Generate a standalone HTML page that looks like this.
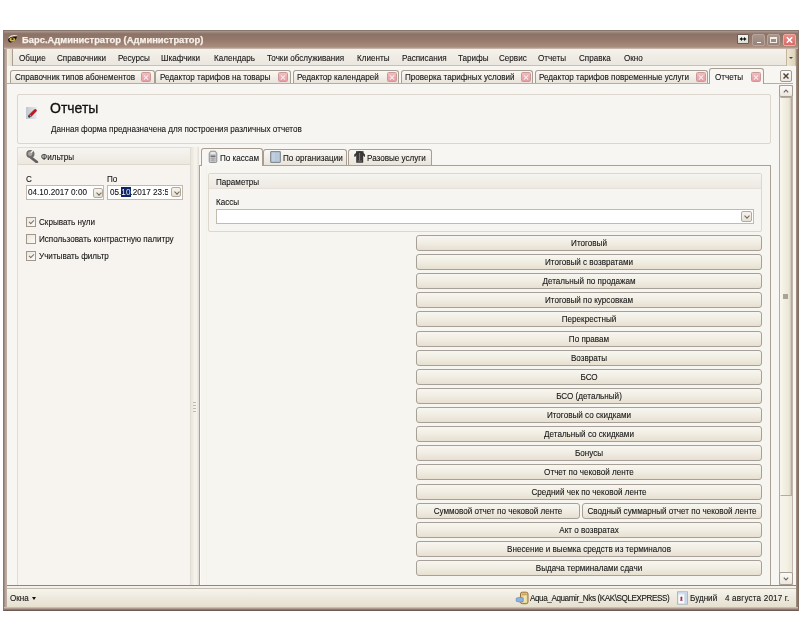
<!DOCTYPE html>
<html><head><meta charset="utf-8">
<style>
*{margin:0;padding:0;box-sizing:border-box}
html,body{width:800px;height:640px;background:#fff;overflow:hidden;font-family:"Liberation Sans",sans-serif;font-size:8px;color:#1e1e1e}
div,span,svg{position:absolute}
.t{white-space:nowrap;line-height:10px;font-size:9px;transform:scaleX(.9);transform-origin:0 0;color:#141414;-webkit-text-stroke:.1px #141414}
#root{left:0;top:0;width:800px;height:640px;will-change:transform;overflow:hidden;filter:blur(0.35px)}
.tab{border:1px solid #a89d91;border-bottom:none;border-radius:3px 3px 0 0;background:linear-gradient(#faf8f4,#e9e4db)}
.x{width:10px;height:10px;border:1px solid #c99a9a;border-radius:1.5px;background:linear-gradient(#f2bcc0,#e59ca2)}
.x:before,.x:after{content:"";position:absolute;left:1px;top:3.6px;width:6px;height:1.1px;background:#fbeef0;transform:rotate(45deg)}
.x:after{transform:rotate(-45deg)}
.btn{left:416px;width:346px;height:16px;border:1px solid #a7a098;border-radius:3px;background:linear-gradient(#f8f6f0,#f1ede3 50%,#e7e0d1);text-align:center;line-height:14px;white-space:nowrap;font-size:9px;color:#141414;-webkit-text-stroke:.1px #141414}
.btn span{position:absolute;left:50%;top:0;transform:translateX(-50%) scaleX(.9)}
.cb{width:10px;height:10px;border:1px solid #a0978a;background:linear-gradient(135deg,#ebe7df,#fbfaf7)}
.chk{left:2px;top:1px;width:5px;height:3px;border-left:1.2px solid #7b746b;border-bottom:1.2px solid #7b746b;transform:rotate(-45deg);top:2px}
.dd{width:10px;height:10px;border:1px solid #b2a99c;border-radius:2px;background:linear-gradient(#f6f3ed,#e6e0d5)}
.dd:after{content:"";position:absolute;left:2.5px;top:1.5px;width:3px;height:3px;border-right:1.2px solid #6d655c;border-bottom:1.2px solid #6d655c;transform:rotate(45deg)}
</style></head><body><div id="root">
<!-- window frame -->
<div style="left:3px;top:30px;width:796px;height:581px;background:linear-gradient(90deg,#8c7a70,#b5a398 1px,#c0afa4 3px,#c4b8b0 4px);border:1px solid #8a776c;border-bottom-color:#6e5a50"></div>
<div style="left:796px;top:48px;width:3px;height:562px;background:linear-gradient(90deg,#a89488,#8a7868 1.5px,#7a665c)"></div>
<div style="left:4px;top:607px;width:794px;height:3px;background:linear-gradient(#dccfc6,#bba89c 1px,#a48e82 2px,#7a665c 3px)"></div>
<div style="left:4px;top:31px;width:794px;height:18px;background:linear-gradient(#b09a90 0,#a08a80 1px,#8c7266 3px,#94796c 9px,#a98c7c 16px,#b8a498 17px,#d0c4bc 18px)"></div>
<!-- eye icon -->
<svg style="left:7px;top:33px" width="12" height="11" viewBox="0 0 12 11">
  <path d="M1.5 4.5 Q5 1 10.5 2.5 L9 3.5 Q5 2.5 2 5.5Z" fill="#efe9e3"/>
  <path d="M1 6.5 Q3 3 10 3.5 Q9 8 4 9.5 Q1.5 10 1 6.5Z" fill="#141008"/>
  <ellipse cx="5.3" cy="6.5" rx="2.8" ry="2" fill="#c9b450"/>
  <ellipse cx="5.5" cy="6" rx="1.2" ry="1" fill="#3a2a08"/>
</svg>
<div class="t" style="left:22px;top:35px;font-weight:bold;font-size:9.4px;letter-spacing:0px;color:#f7f1ea;transform:none;-webkit-text-stroke:0.25px #f7f1ea">Барс.Администратор (Администратор)</div>
<!-- title buttons -->
<div style="left:737px;top:34px;width:12px;height:10px;background:linear-gradient(#f4f4f0,#dcdcd6);border:1px solid #6a5a52;border-radius:1px"></div>
<svg style="left:737px;top:34px" width="12" height="10"><path d="M2.5 5 L5 3 L5 7Z M9.5 5 L7 3 L7 7Z" fill="#111"/><rect x="4" y="4.4" width="4" height="1.2" fill="#111"/></svg>
<div style="left:752px;top:34px;width:13px;height:12px;background:linear-gradient(#a8958b,#97817a);border:1px solid #b6a49a;border-radius:2px"></div>
<div style="left:756.5px;top:41.5px;width:4px;height:1.6px;background:#fff"></div>
<div style="left:767px;top:34px;width:13px;height:12px;background:linear-gradient(#a8958b,#97817a);border:1px solid #b6a49a;border-radius:2px"></div>
<div style="left:770px;top:37px;width:7px;height:6px;border:1px solid #f4eee8;border-top:2px solid #f4eee8"></div>
<div style="left:783px;top:34px;width:13px;height:12px;background:linear-gradient(#ea8c86,#d76a66);border:1px solid #f0aaa4;border-radius:2px"></div>
<svg style="left:783px;top:34px" width="13" height="12"><path d="M3.8 3.3 L9.2 8.7 M9.2 3.3 L3.8 8.7" stroke="#fff" stroke-width="1.6"/></svg>

<!-- menu bar -->
<div style="left:7px;top:49px;width:788px;height:17px;background:linear-gradient(#f5f2ec,#ebe6de);border-bottom:1px solid #c9bfb3"></div>
<div style="left:7px;top:49px;width:6px;height:17px;background:linear-gradient(90deg,#f4efe4,#e8dfc8);border-right:1px solid #a89e94;border-radius:2px 0 0 0"></div>
<div class="t" style="left:19px;top:53px">Общие</div>
<div class="t" style="left:57px;top:53px">Справочники</div>
<div class="t" style="left:118px;top:53px">Ресурсы</div>
<div class="t" style="left:161px;top:53px">Шкафчики</div>
<div class="t" style="left:214px;top:53px">Календарь</div>
<div class="t" style="left:267px;top:53px">Точки обслуживания</div>
<div class="t" style="left:357px;top:53px">Клиенты</div>
<div class="t" style="left:402px;top:53px">Расписания</div>
<div class="t" style="left:458px;top:53px">Тарифы</div>
<div class="t" style="left:499px;top:53px">Сервис</div>
<div class="t" style="left:538px;top:53px">Отчеты</div>
<div class="t" style="left:579px;top:53px">Справка</div>
<div class="t" style="left:624px;top:53px">Окно</div>
<div style="left:786px;top:49px;width:9px;height:17px;background:linear-gradient(90deg,#ede6d2,#ddd3b9);border-left:1px solid #c1b59c"></div>
<div style="left:789px;top:57px;width:0;height:0;border-left:2px solid transparent;border-right:2px solid transparent;border-top:2px solid #444"></div>

<!-- tab strip -->
<div style="left:7px;top:66px;width:789px;height:19px;background:#f8f6f2"></div>
<div style="left:7px;top:83px;width:786px;height:1px;background:#b7ada1"></div>
<div class="tab" style="left:10px;top:70px;width:145px;height:13px"></div>
<div class="t" style="left:15px;top:72px">Справочник типов абонементов</div>
<div class="x" style="left:141px;top:72px"></div>
<div class="tab" style="left:155px;top:70px;width:136px;height:13px"></div>
<div class="t" style="left:160px;top:72px">Редактор тарифов на товары</div>
<div class="x" style="left:278px;top:72px"></div>
<div class="tab" style="left:293px;top:70px;width:106px;height:13px"></div>
<div class="t" style="left:297px;top:72px">Редактор календарей</div>
<div class="x" style="left:387px;top:72px"></div>
<div class="tab" style="left:401px;top:70px;width:132px;height:13px"></div>
<div class="t" style="left:405px;top:72px">Проверка тарифных условий</div>
<div class="x" style="left:521px;top:72px"></div>
<div class="tab" style="left:535px;top:70px;width:173px;height:13px"></div>
<div class="t" style="left:539px;top:72px">Редактор тарифов повременные услуги</div>
<div class="x" style="left:696px;top:72px"></div>
<div class="tab" style="left:709px;top:68px;width:55px;height:17px;background:#f8f6f2"></div>
<div class="t" style="left:715px;top:72px">Отчеты</div>
<div class="x" style="left:751px;top:72px"></div>
<div style="left:780px;top:70px;width:12px;height:12px;border:1px solid #a49a8e;border-radius:2px;background:linear-gradient(#fbfaf7,#ebe6de)"></div>
<svg style="left:780px;top:70px" width="12" height="12"><path d="M3.5 3.5 L8.5 8.5 M8.5 3.5 L3.5 8.5" stroke="#4a4038" stroke-width="1.4"/></svg>

<!-- content area -->
<div style="left:7px;top:84px;width:789px;height:501px;background:#f8f6f2"></div>
<!-- header panel -->
<div style="left:17px;top:94px;width:754px;height:50px;background:#f7f5f1;border:1px solid #dcd6cc;border-radius:2px"></div>
<svg style="left:26px;top:106px" width="12" height="13" viewBox="0 0 12 13">
  <defs><linearGradient id="ig" x1="0" x2="1"><stop offset="0" stop-color="#c2c6ce"/><stop offset="1" stop-color="#e6e8ee"/></linearGradient></defs>
  <rect x="0" y="1" width="10.5" height="12" fill="url(#ig)"/>
  <path d="M3.2 8.6 L8.4 3.4 Q9.6 2.6 10.6 3.8 Q11.2 4.8 10.4 5.6 L5.3 10.7Z" fill="#b41c26"/>
  <path d="M4 7.8 L8.6 3.2" stroke="#d84048" stroke-width="0.8"/>
  <path d="M3.2 8.6 L5.3 10.7 L3.6 11.6 Q2.4 11.8 2.1 10.6 Q2 9.6 3.2 8.6Z" fill="#26262c"/>
  <circle cx="4.2" cy="9.8" r="0.6" fill="#e8e8ea"/>
</svg>
<div class="t" style="left:50px;top:101px;font-size:14px;line-height:14px;color:#111;transform:none;-webkit-text-stroke:0.3px #111">Отчеты</div>
<div class="t" style="left:51px;top:124px">Данная форма предназначена для построения различных отчетов</div>

<!-- left panel -->
<div style="left:17px;top:147px;width:174px;height:438px;background:#f7f4ef;border:1px solid #e2ddd4;border-bottom:none"></div>
<div style="left:18px;top:148px;width:172px;height:17px;background:linear-gradient(#f7f5f1,#ece8e0);border-bottom:1px solid #ddd7cd"></div>
<svg style="left:25px;top:149px" width="14" height="14" viewBox="0 0 14 14">
  <path d="M6 8.5 L11.8 13" stroke="#626060" stroke-width="2.8" stroke-linecap="round"/>
  <circle cx="5.4" cy="5" r="4.1" fill="#6f6d6b"/>
  <circle cx="5.2" cy="4.8" r="2.2" fill="#a9a7a4"/>
  <path d="M8.2 1.2 L6 3.8" stroke="#f1eee8" stroke-width="1.4"/>
</svg>
<div class="t" style="left:41px;top:152px">Фильтры</div>
<div class="t" style="left:26px;top:174px">С</div>
<div class="t" style="left:107px;top:174px">По</div>
<div style="left:26px;top:185px;width:78px;height:15px;background:#fff;border:1px solid #c2baae"></div>
<div class="t" style="left:28px;top:186.5px;font-size:9.6px;transform:scaleX(.85)">04.10.2017 0:00</div>
<div class="dd" style="left:93px;top:188px"></div>
<div style="left:107px;top:185px;width:76px;height:15px;background:#fff;border:1px solid #c2baae"></div>
<div style="left:121px;top:187px;width:10px;height:10px;background:#0b246a"></div>
<div style="left:108px;top:186px;width:60px;height:13px;overflow:hidden">
  <div class="t" style="left:1.5px;top:0.5px;font-size:9.6px;transform:scaleX(.85)">05.<span style="position:static;color:#fff">10</span>.2017 23:59</div>
</div>
<div class="dd" style="left:171px;top:187px"></div>
<div class="cb" style="left:26px;top:217px"><div class="chk"></div></div>
<div class="t" style="left:39px;top:217px">Скрывать нули</div>
<div class="cb" style="left:26px;top:234px"></div>
<div class="t" style="left:39px;top:234px">Использовать контрастную палитру</div>
<div class="cb" style="left:26px;top:251px"><div class="chk"></div></div>
<div class="t" style="left:39px;top:251px">Учитывать фильтр</div>

<!-- splitter -->
<div style="left:191px;top:147px;width:8px;height:438px;background:linear-gradient(90deg,#e8e6e0,#eeeae0 2px,#f5f1eb 3px,#f5f1eb 6px,#e6e0d8 7px)"></div>
<div style="left:193px;top:402px;width:3px;height:1px;background:#c0b8ac"></div>
<div style="left:193px;top:405px;width:3px;height:1px;background:#c0b8ac"></div>
<div style="left:193px;top:408px;width:3px;height:1px;background:#c0b8ac"></div>
<div style="left:193px;top:411px;width:3px;height:1px;background:#c0b8ac"></div>

<!-- tab control -->
<div style="left:199px;top:165px;width:572px;height:420px;background:#f7f5f0;border:1px solid #aaa094;border-bottom:none"></div>
<div style="left:200px;top:166px;width:1px;height:419px;background:#fcfbf8"></div>
<div style="left:206px;top:166px;width:1px;height:419px;background:#f3f0ea"></div>
<div class="tab" style="left:263px;top:149px;width:84px;height:16px"></div>
<div class="tab" style="left:348px;top:149px;width:84px;height:16px"></div>
<div class="tab" style="left:201px;top:148px;width:62px;height:18px;background:#f8f6f2"></div>
<svg style="left:208px;top:150px" width="10" height="13" viewBox="0 0 10 13">
  <path d="M2.5 1.2 L7.5 1.2 L8.8 3.5 L8.8 11.5 Q8.8 12.5 7.8 12.5 L2.2 12.5 Q1.2 12.5 1.2 11.5 L1.2 3.5Z" fill="#c9cacc" stroke="#88888a" stroke-width="0.9"/>
  <rect x="2.8" y="2" width="4.4" height="2" fill="#e6e8ec"/>
  <rect x="2.6" y="5.6" width="4.8" height="1.2" fill="#5a5a5c"/>
  <path d="M2.5 8.3 H7.5 M2.5 10.2 H7.5 M4.2 7.5 V11.5 M5.8 7.5 V11.5" stroke="#9a9a9c" stroke-width="0.6"/>
</svg>
<div class="t" style="left:220px;top:153px">По кассам</div>
<svg style="left:270px;top:151px" width="11" height="12" viewBox="0 0 11 12">
  <rect x="0.6" y="0.6" width="9.8" height="10.8" rx="0.8" fill="#b4c5d6" stroke="#858c94" stroke-width="1.1"/>
  <rect x="2" y="1.5" width="3.2" height="9" fill="#c0d0e0"/><rect x="5.8" y="1.5" width="3.4" height="9" fill="#b8c9db"/>
</svg>
<div class="t" style="left:283px;top:153px">По организации</div>
<svg style="left:353px;top:150px" width="13" height="14" viewBox="0 0 13 14">
  <path d="M3 1.2 Q6.8 0.6 10.6 1.2 L10.6 3 L12 4.6 L12 6.8 L11 6.8 L10.2 5.2 L10.2 12.8 L3.2 12.8 L3.2 5.2 L2.4 6.8 L1.2 6.8 L1.2 4.6 L3 3Z" fill="#3a3836"/>
  <rect x="6.2" y="3" width="0.9" height="8" fill="#8a8682"/>
  <rect x="4.5" y="10.5" width="4.5" height="1.2" fill="#6a6662"/>
</svg>
<div class="t" style="left:367px;top:153px">Разовые услуги</div>

<!-- params group -->
<div style="left:208px;top:173px;width:554px;height:59px;background:#f7f5f1;border:1px solid #ddd7cd;border-radius:2px"></div>
<div style="left:209px;top:174px;width:552px;height:15px;background:linear-gradient(#f6f4f0,#ede9e2);border-bottom:1px solid #e6e1d8"></div>
<div class="t" style="left:216px;top:177px">Параметры</div>
<div class="t" style="left:216px;top:197px">Кассы</div>
<div style="left:216px;top:209px;width:538px;height:15px;background:#fff;border:1px solid #c2baae"></div>
<div class="dd" style="left:741px;top:211px;width:11px;height:11px"></div>

<!-- buttons -->
<div class="btn" style="top:235px"><span>Итоговый</span></div>
<div class="btn" style="top:254px"><span>Итоговый с возвратами</span></div>
<div class="btn" style="top:273px"><span>Детальный по продажам</span></div>
<div class="btn" style="top:292px"><span>Итоговый по курсовкам</span></div>
<div class="btn" style="top:311px"><span>Перекрестный</span></div>
<div class="btn" style="top:331px"><span>По правам</span></div>
<div class="btn" style="top:350px"><span>Возвраты</span></div>
<div class="btn" style="top:369px"><span>БСО</span></div>
<div class="btn" style="top:388px"><span>БСО (детальный)</span></div>
<div class="btn" style="top:407px"><span>Итоговый со скидками</span></div>
<div class="btn" style="top:426px"><span>Детальный со скидками</span></div>
<div class="btn" style="top:445px"><span>Бонусы</span></div>
<div class="btn" style="top:464px"><span>Отчет по чековой ленте</span></div>
<div class="btn" style="top:484px"><span>Средний чек по чековой ленте</span></div>
<div class="btn" style="top:503px;width:164px"><span>Суммовой отчет по чековой ленте</span></div>
<div class="btn" style="top:503px;left:582px;width:180px"><span>Сводный суммарный отчет по чековой ленте</span></div>
<div class="btn" style="top:522px"><span>Акт о возвратах</span></div>
<div class="btn" style="top:541px"><span>Внесение и выемка средств из терминалов</span></div>
<div class="btn" style="top:560px"><span>Выдача терминалами сдачи</span></div>

<!-- scrollbar -->
<div style="left:779px;top:85px;width:14px;height:500px;background:linear-gradient(90deg,#f6f3ec,#f4f1e6 50%,#ebe6d8);border-left:1px solid #b5aca3;border-right:1px solid #c2b8b0"></div>
<div style="left:779px;top:85px;width:14px;height:12px;border:1px solid #a89e92;border-radius:2px;background:linear-gradient(#fbfaf7,#ece7dd)"></div>
<svg style="left:779px;top:85px" width="14" height="12"><path d="M4.8 7.3 L7 5.1 L9.2 7.3" stroke="#6e6862" stroke-width="1.2" fill="none"/></svg>
<div style="left:780px;top:97px;width:12px;height:399px;border:1px solid #b4aa9e;border-left-color:#f8f4ee;border-radius:1px;background:linear-gradient(90deg,#f8f6ec,#f0eee0 40%,#ebe7d6 80%,#cdc3b8)"></div>
<div style="left:783px;top:294px;width:4.5px;height:4.5px;background:#aaa498"></div>
<div style="left:779px;top:572px;width:14px;height:13px;border:1px solid #a89e92;border-radius:2px;background:linear-gradient(#fbfaf7,#ece7dd)"></div>
<svg style="left:779px;top:572px" width="14" height="13"><path d="M4.8 5.7 L7 7.9 L9.2 5.7" stroke="#6e6862" stroke-width="1.2" fill="none"/></svg>

<!-- bottom lines -->
<div style="left:7px;top:585px;width:789px;height:1px;background:#8f877c"></div>
<div style="left:7px;top:586px;width:789px;height:2px;background:#f4f1ec"></div>
<div style="left:7px;top:588px;width:789px;height:1px;background:#c4bbaf"></div>
<!-- status bar -->
<div style="left:7px;top:589px;width:789px;height:18px;background:linear-gradient(#f6f4ee,#eeeadf 45%,#e6e0cf)"></div>
<div class="t" style="left:10px;top:593px">Окна</div>
<div style="left:32px;top:597px;width:0;height:0;border-left:2.5px solid transparent;border-right:2.5px solid transparent;border-top:3px solid #111"></div>
<svg style="left:515px;top:591px" width="14" height="14" viewBox="0 0 14 14">
  <rect x="5.5" y="1.2" width="7.5" height="11.5" rx="1.8" fill="#e2d08a" stroke="#9c6e34" stroke-width="1"/>
  <rect x="6.8" y="2.6" width="5" height="1.6" fill="#c8a060"/>
  <rect x="8.5" y="4.5" width="3" height="7" fill="#efe4b0"/>
  <path d="M1.2 7.2 L5 6.2 L8.2 7 L8.2 10.4 L5 11.2 L1.2 10.2Z" fill="#8ab2e2" stroke="#5a80b8" stroke-width="0.6"/>
</svg>
<div class="t" style="left:530px;top:593px;letter-spacing:-0.45px">Aqua_Aquamir_Nks (KAK\SQLEXPRESS)</div>
<svg style="left:677px;top:591px" width="11" height="14" viewBox="0 0 11 14">
  <rect x="0.6" y="0.8" width="9.8" height="12.4" fill="#d6e2ee" stroke="#a2b2c2" stroke-width="0.9"/>
  <rect x="1.4" y="3.6" width="6" height="8.8" fill="#fbf8fa"/>
  <rect x="7.6" y="1.8" width="2.2" height="10.6" fill="#c6d6e8"/>
  <path d="M3.4 6 Q4.4 5 5.4 6 L5.2 8.4 L5.8 9.8 L3 9.8 L3.6 8.4Z" fill="#8c3a4c"/>
</svg>
<div class="t" style="left:690px;top:593px">Будний</div>
<div class="t" style="left:725px;top:593px;letter-spacing:0.2px">4 августа 2017 г.</div>
</div></body></html>
